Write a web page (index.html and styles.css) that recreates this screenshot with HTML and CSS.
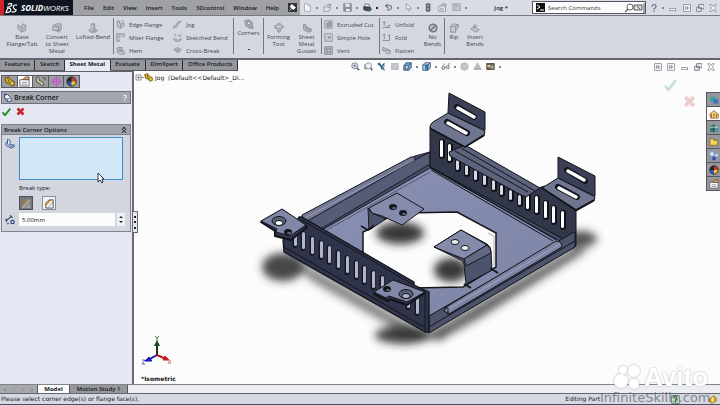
FILE: index.html
```html
<!DOCTYPE html>
<html lang="en">
<head>
<meta charset="utf-8">
<title>SolidWorks - Jog</title>
<link rel="stylesheet" href="styles.css">
</head>
<body>
<svg class="sprite" aria-hidden="true">
  <symbol id="flange" viewBox="0 0 12 12"><path d="M1 2l3-1 2 5 4-2 1 3-5 4-4-2z" fill="#c3c5cb" stroke="#85878e"/><path d="M4 1l2 5v5M7 1l3 1v2" fill="none" stroke="#85878e"/></symbol>
  <symbol id="miter" viewBox="0 0 12 12"><path d="M1 1h10v4H5v6H1z" fill="#b9bbc2" stroke="#8b8d94"/><path d="M6 10l4-4M3 9l6-7" stroke="#e8eaf0"/></symbol>
  <symbol id="hem" viewBox="0 0 12 12"><path d="M9 2H3Q1 2 1 4t2 2h8M3 4h6M1 8l4 3h6V8L5 7z" fill="#c5c7ce" stroke="#85878e"/></symbol>
  <symbol id="jog" viewBox="0 0 12 12"><path d="M1 8l3-1 3-5h4L8 4 5 9l-4 2z" fill="#c5c7ce" stroke="#85878e"/></symbol>
  <symbol id="bend" viewBox="0 0 12 12"><path d="M2 1l2 4M1 7q5 5 10 0l-1 3q-4 3-8 0zM7 2l2 3 2-3" fill="#c5c7ce" stroke="#85878e"/></symbol>
  <symbol id="cross" viewBox="0 0 12 12"><path d="M1 5l5-3 5 3-4 4z" fill="#c5c7ce" stroke="#85878e"/><path d="M3 4l6 3M8 3L5 8" stroke="#85878e"/></symbol>
  <symbol id="base" viewBox="0 0 12 12"><path d="M1 2l4 3 2-4 4 2-1 6-5 2-4-4z" fill="#bfc1c8" stroke="#8b8d94"/><path d="M5 5l1 5M10 4L6 8" stroke="#85878e"/></symbol>
  <symbol id="convert" viewBox="0 0 12 12"><path d="M1 3l4-2h6v6L8 9H1z" fill="#bfc1c8" stroke="#8b8d94"/><path d="M3 4h5v4M5 9l3 2 3-3" fill="none" stroke="#777a82"/></symbol>
  <symbol id="loft" viewBox="0 0 12 12"><path d="M4 1h4v5l3 3-2 2H3L1 9l3-3z" fill="#a6a8b0" stroke="#8b8d94"/><path d="M5 2v5l-2 3" fill="none" stroke="#e0e2e8"/></symbol>
  <symbol id="corner" viewBox="0 0 12 12"><path d="M1 2l5-1 4 3v3l1 4H7L2 8z" fill="#a8aab1" stroke="#85878e"/><circle cx="6" cy="5" r="2" fill="#d8dae1" stroke="#85878e"/></symbol>
  <symbol id="form" viewBox="0 0 12 12"><path d="M1 3h3V1h4v2h3v3H9l-2 5H5L3 6H1z" fill="#b2b4bb" stroke="#8b8d94"/><path d="M3 4h6" stroke="#e6e8ee"/></symbol>
  <symbol id="gusset" viewBox="0 0 12 12"><path d="M2 1l2 1v4l7 1v3l-4 1-5-3z" fill="#bfc1c8" stroke="#85878e"/><path d="M4 2l4 5M5 8l5 1" stroke="#85878e"/></symbol>
  <symbol id="cut" viewBox="0 0 12 12"><rect x="1" y="1" width="10" height="10" fill="#c3c5cb" stroke="#92949a"/><path d="M4 9V5l2-2h3v5L7 9z" fill="#9da0a8" stroke="#7d8088"/></symbol>
  <symbol id="hole" viewBox="0 0 12 12"><rect x="1" y="1" width="10" height="10" fill="#c3c5cb" stroke="#92949a"/><circle cx="7" cy="6" r="3" fill="#9da0a8" stroke="#e2e4ea"/></symbol>
  <symbol id="vent" viewBox="0 0 12 12"><rect x="1" y="1" width="10" height="10" fill="#c3c5cb" stroke="#7d8088"/><path d="M1 4h10M1 8h10M4 1v10M8 1v10" stroke="#7d8088"/></symbol>
  <symbol id="unfold" viewBox="0 0 12 12"><path d="M1 10h10M3 8V2M1 4l2-2 2 2M6 8h4V6" fill="none" stroke="#777a82"/></symbol>
  <symbol id="fold" viewBox="0 0 12 12"><path d="M1 10h9V2M3 2v6M1 3l2-2 2 2M8 4l2-2" fill="none" stroke="#777a82"/></symbol>
  <symbol id="flat" viewBox="0 0 12 12"><path d="M1 2v4h3l2 4h5V6L7 4z" fill="#c5c7ce" stroke="#85878e"/><path d="M4 6h7" stroke="#85878e"/></symbol>
  <symbol id="nobend" viewBox="0 0 12 12"><circle cx="6" cy="6" r="4.500" fill="#c5c7ce" stroke="#74777e" stroke-width="2"/><path d="M3 9l6-6" stroke="#74777e" stroke-width="2"/></symbol>
  <symbol id="rip" viewBox="0 0 12 12"><path d="M2 4l3-3 6 1v4l-3 2v3H2z" fill="#c9cbd2" stroke="#85878e"/><path d="M2 4h6v4M8 4l3-2" fill="none" stroke="#85878e"/></symbol>
  <symbol id="insert" viewBox="0 0 12 12"><path d="M1 7l4-2 6 3-4 3zM6 1v4M4 3l2 3 3-3" fill="#c5c7ce" stroke="#85878e"/></symbol>

  <symbol id="doc" viewBox="0 0 12 12"><path d="M2 1h5l3 3v7H2z" fill="#f5f6fa" stroke="#9a9ca3"/><path d="M7 1v3h3" fill="none" stroke="#9a9ca3"/></symbol>
  <symbol id="open" viewBox="0 0 12 12"><path d="M1 5h4l1 1h4l-2 5H1z" fill="#dfe1e7" stroke="#8d8f96"/><path d="M5 4q2-4 5-2M10 1v3H7" fill="none" stroke="#777a82"/></symbol>
  <symbol id="save" viewBox="0 0 12 12"><path d="M1 1h10v10H1z" fill="#92949c" stroke="#777a82"/><path d="M3 1h6v4H3zM4 8h5v3H4z" fill="#e5e7ed"/></symbol>
  <symbol id="print" viewBox="0 0 12 12"><path d="M3 1l5 1 1 3H2z" fill="#fff" stroke="#444c58"/><path d="M1 5l9 1 1 3-3 2-7-2z" fill="#42505f" stroke="#27313c"/><path d="M5 9h5l-2 2z" fill="#2b7fb4"/></symbol>
  <symbol id="undo" viewBox="0 0 12 12"><path d="M4 9q6 1 6-3T3 4M5 1L2 4l4 3" fill="none" stroke="#777a82" stroke-width="1.500"/></symbol>
  <symbol id="arrow" viewBox="0 0 12 12"><path d="M3 1v8l2-2 2 4 1-1-1-3h3z" fill="#f2f3f7" stroke="#8d8f96"/></symbol>
  <symbol id="signal" viewBox="0 0 12 12"><rect x="3" y="1" width="5" height="10" rx="1" fill="#6c6e75" stroke="#55575e"/><circle cx="5.500" cy="3.500" r="1" fill="#ccc"/><circle cx="5.500" cy="8" r="1" fill="#ccc"/></symbol>
  <symbol id="props" viewBox="0 0 12 12"><path d="M1 4h9v7H1z" fill="#eceef3" stroke="#85878e"/><path d="M4 4l2-3 5 1-3 3M3 7h5M3 9h4" fill="#c4c6cc" stroke="#85878e"/></symbol>
  <symbol id="list" viewBox="0 0 12 12"><path d="M1 1h10v9H1z" fill="#d0d2d9" stroke="#92949a"/><path d="M3 3h6M3 5h6M3 7h3M8 7h2" stroke="#92949a"/></symbol>
  <symbol id="pin" viewBox="0 0 12 12"><rect width="12" height="12" fill="#33353b"/><path d="M5 2l5 4-3 3-4-4zM5 7l-3 3" fill="#fff" stroke="#fff"/></symbol>
  <symbol id="help" viewBox="0 0 12 12"><path d="M3 4q0-3 3-3t3 3q0 2-3 3v1" fill="none" stroke="#777a82" stroke-width="2"/><path d="M6 9.500v2" stroke="#777a82" stroke-width="2"/></symbol>
  <symbol id="min" viewBox="0 0 12 12"><rect x="1" y="7" width="9" height="3" fill="#fff" stroke="#777a82"/></symbol>
  <symbol id="tile" viewBox="0 0 12 12"><rect x="1" y="1" width="10" height="10" fill="#f3f4f8" stroke="#777a82"/><path d="M4 3v6M7 3v6M3 6h6" stroke="#777a82"/></symbol>
  <symbol id="rest" viewBox="0 0 12 12"><path d="M4 1h8v6H4zM1 5h7v6H1z" fill="#eef0f5" stroke="#777a82" stroke-width="1.400"/></symbol>
  <symbol id="close" viewBox="0 0 12 12"><path d="M1 1h3l2 3 2-3h3L8 6l3 5H8L6 8l-2 3H1l3-5z" fill="#fff" stroke="#777a82"/></symbol>

  <symbol id="zoomfit" viewBox="0 0 12 12"><circle cx="5" cy="5" r="4" fill="#e6ebf2" stroke="#59616d"/><path d="M8 8l3 3" stroke="#59616d" stroke-width="2"/><path d="M3 5h4M5 3v4" stroke="#3f5f8d"/></symbol>
  <symbol id="zoomarea" viewBox="0 0 12 12"><circle cx="6" cy="5" r="4" fill="#eff1f5" stroke="#7d828c"/><path d="M9 8l2 3" stroke="#59616d" stroke-width="2"/><path d="M1 9V3M1 9h3" stroke="#59616d"/></symbol>
  <symbol id="prev" viewBox="0 0 12 12"><path d="M1 2l5 4 4-4M3 1l4 9M6 6l4 5" fill="none" stroke="#24567a" stroke-width="1.600"/><path d="M7 8l3-3" stroke="#41a0b0" stroke-width="2"/></symbol>
  <symbol id="section" viewBox="0 0 12 12"><path d="M2 2h9v8H2z" fill="#c5c6ca" stroke="#aeb0b5"/></symbol>
  <symbol id="orient" viewBox="0 0 12 12"><path d="M1 5l3-4h7v6l-3 4H1z" fill="#72a2cc" stroke="#29465f"/><path d="M3 5h4v4H3zM8 4l3-3" fill="#e9f2fa" stroke="#29465f"/></symbol>
  <symbol id="cube" viewBox="0 0 12 12"><path d="M1 4l3-3h7v7l-3 3H1z" fill="#b8cde4" stroke="#244467"/><path d="M4 4h4v7H4z" fill="#3e7cba"/><path d="M1 4h7v7M8 4l3-3" fill="none" stroke="#244467"/></symbol>
  <symbol id="glasses" viewBox="0 0 12 12"><circle cx="3" cy="8" r="2" fill="#eee" stroke="#565a62"/><circle cx="9" cy="7" r="2" fill="#eee" stroke="#565a62"/><path d="M5 7h2M2 6l3-4M10 5l1-4" fill="none" stroke="#565a62"/></symbol>
  <symbol id="ball" viewBox="0 0 12 12"><circle cx="6" cy="6" r="5" fill="#c3c4c8" stroke="#b3b5b9"/></symbol>
  <symbol id="scene" viewBox="0 0 12 12"><path d="M6 1l5 9H1z" fill="#c0c1c5" stroke="#aeb0b5"/><path d="M3 9h7" stroke="#999ba0"/></symbol>
  <symbol id="view" viewBox="0 0 12 12"><path d="M1 2h10v8H1z" fill="#6d6358" stroke="#3d3833"/><path d="M2 4h4v3H2z" fill="#ddc7a1"/><path d="M7 5h3v4H7z" fill="#a6bf91"/></symbol>

  <symbol id="part" viewBox="0 0 12 12"><path d="M1 2l4-1 3 4 3 1v4l-3 1-3-3-3-1z" fill="#e1b824" stroke="#57450f"/><path d="M4 2l1 4 4 3" fill="none" stroke="#57450f"/><circle cx="9" cy="8" r="1" fill="#fff1a2"/></symbol>
  <symbol id="hand" viewBox="0 0 12 12"><path d="M1 4h10v7H1z" fill="#fff" stroke="#5f6269"/><path d="M4 4l3-3h4v3z" fill="#e6a46c" stroke="#76503a"/><path d="M3 7h6M3 9h6" stroke="#8d8f96"/></symbol>
  <symbol id="config" viewBox="0 0 12 12"><path d="M1 2l3-1 1 4 3 1 2 4-3 1-2-3-3-1z" fill="#c7c193" stroke="#55533f"/><path d="M8 2h3v3" fill="none" stroke="#444"/></symbol>
  <symbol id="target" viewBox="0 0 12 12"><circle cx="6" cy="6" r="3.500" fill="none" stroke="#cf4bd2"/><path d="M6 0v12M0 6h12" stroke="#cf4bd2"/></symbol>
  <symbol id="wheel" viewBox="0 0 12 12"><circle cx="6" cy="6" r="5" fill="#2a58c2"/><path d="M6 6V1a5 5 0 0 1 5 5z" fill="#d93a20"/><path d="M6 6h5a5 5 0 0 1-5 5z" fill="#f3cb23"/><path d="M6 6H1a5 5 0 0 1 5-5z" fill="#252525"/><circle cx="6" cy="6" r="5" fill="none" stroke="#222"/></symbol>
  <symbol id="breakc" viewBox="0 0 12 12"><path d="M2 6V2h4l5 5v4H5z" fill="#f5f7fb" stroke="#1e2e50"/><path d="M2 6l4 2v3M6 8l4-1" fill="none" stroke="#2d4a83"/><circle cx="3" cy="2" r="1.500" fill="#3455a8"/></symbol>
  <symbol id="edge" viewBox="0 0 12 12"><path d="M3 1l3 1v5l5 1v2l-4 1.500L1 8V5l2-1z" fill="#edf1fa" stroke="#294a85"/><path d="M3 4v3l4 2 4-1M7 9v2" fill="none" stroke="#294a85"/><circle cx="8" cy="9" r="1.500" fill="#7f9fd2"/></symbol>
  <symbol id="dist" viewBox="0 0 12 12"><path d="M1 8l7-6M1 5l1 4M6 1l3 3" fill="none" stroke="#333d55" stroke-width="1.300"/><circle cx="9" cy="9" r="2" fill="none" stroke="#293f86" stroke-width="1.300"/><path d="M2 11h3" stroke="#293f86"/></symbol>
  <symbol id="check" viewBox="0 0 12 12"><path d="M1 7l3 4 7-9" fill="none" stroke="currentColor" stroke-width="2.600"/></symbol>
  <symbol id="x" viewBox="0 0 12 12"><path d="M2 2l8 8M10 2l-8 8" fill="none" stroke="currentColor" stroke-width="3.400"/></symbol>
  <symbol id="chamfer" viewBox="0 0 12 12"><path d="M2 11V6l4-4h4v9z" fill="#fbfbfd"/><path d="M1 6l4-4h4L2 9z" fill="#e1a537"/><path d="M3 11l7-8v3l-5 5z" fill="#c1c4cc"/><path d="M2 11V6l4-4h4v9z" fill="none" stroke="#555"/></symbol>
  <symbol id="fillet" viewBox="0 0 12 12"><path d="M1 11Q1 2 10 1v10z" fill="#a9a7a2"/><path d="M1 9Q2 2 9 1L2 9z" fill="#a37b3d"/><path d="M3 11l7-8v4l-4 4z" fill="#8d9098"/></symbol>
  <symbol id="chat" viewBox="0 0 12 12"><path d="M1 2h7v5H4L2 9V7H1z" fill="#36a98d"/><path d="M5 5h6v5H9l-1 1-1-1H5z" fill="#3c71c5"/></symbol>
  <symbol id="home" viewBox="0 0 12 12"><path d="M1 6l5-4 5 4v5H2z" fill="#f4d98b" stroke="#90602a"/><path d="M3 6v4M6 5v5M9 6v4" stroke="#9b3b21"/></symbol>
  <symbol id="books" viewBox="0 0 12 12"><path d="M1 3h3v8H1z" fill="#2e8b50"/><path d="M4 2h3v9H4z" fill="#27537d"/><path d="M8 3h3v8H8z" fill="#35a0a0"/><path d="M1 5h10" stroke="#e1e5c5"/></symbol>
  <symbol id="folder" viewBox="0 0 12 12"><path d="M1 2h4l1 2h5l-1 6H1z" fill="#f2d461" stroke="#80651b"/></symbol>
  <symbol id="palette" viewBox="0 0 12 12"><path d="M1 1h5v5H1zM7 3h4v4H7z" fill="#dfe8f4" stroke="#7694b9"/><path d="M4 7h4v4H4z" fill="#2856b1"/></symbol>
</svg>

<div class="app">
  <header class="titlebar">
    <div class="brand">
      <svg class="brand-mark" viewBox="0 0 14 12" aria-hidden="true"><path d="M3 2q5-2 4 1-1 2-5 2M3 6q4 0 3 3-1 2-5 2L3 6M13 3Q8 2 9 5t3 3q0 3-5 2" fill="none" stroke="#fff" stroke-width="1.300"/></svg>
      <span class="brand-name"><b>SOLID</b>WORKS</span>
    </div>
    <nav class="menus">
      <a href="#">File</a><a href="#">Edit</a><a href="#">View</a><a href="#">Insert</a><a href="#">Tools</a><a href="#">3Dcontrol</a><a href="#">Window</a><a href="#">Help</a>
      <button class="ib" aria-label="Pin menu"><svg><use href="#pin"/></svg></button>
    </nav>
    <div class="quick">
      <button class="ib drop" aria-label="New"><svg><use href="#doc"/></svg></button>
      <button class="ib drop" aria-label="Open"><svg><use href="#open"/></svg></button>
      <button class="ib drop" aria-label="Save"><svg><use href="#save"/></svg></button>
      <button class="ib drop dark" aria-label="Print"><svg><use href="#print"/></svg></button>
      <button class="ib drop" aria-label="Undo"><svg><use href="#undo"/></svg></button>
      <button class="ib drop" aria-label="Select"><svg><use href="#arrow"/></svg></button>
      <button class="ib" aria-label="Rebuild"><svg><use href="#signal"/></svg></button>
      <button class="ib" aria-label="File properties"><svg><use href="#props"/></svg></button>
      <button class="ib drop" aria-label="Options"><svg><use href="#list"/></svg></button>
    </div>
    <h1 class="doc-title">Jog *</h1>
    <div class="search">
      <svg class="prompt" viewBox="0 0 9 9" aria-hidden="true"><rect width="9" height="9" fill="#111"/><path d="M1 2l3 2-3 2M4 7h4" fill="none" stroke="#fff"/></svg>
      <input type="text" aria-label="Search Commands" placeholder="Search Commands">
      <svg class="lens" viewBox="0 0 20 10" aria-hidden="true"><circle cx="5" cy="4" r="3" fill="#fff" stroke="#666"/><path d="M3 6L0 9" stroke="#666" stroke-width="1.500"/><path d="M9 2h8v5H9z" fill="#ddd" stroke="#555"/><path d="M12 3l3 3M19 0v10" stroke="#555"/></svg>
    </div>
    <div class="window-tools">
      <button class="ib drop" aria-label="Help"><svg><use href="#help"/></svg></button>
      <button class="ib" aria-label="Minimize"><svg><use href="#min"/></svg></button>
      <button class="ib" aria-label="Tile"><svg><use href="#tile"/></svg></button>
      <button class="ib" aria-label="Restore"><svg><use href="#rest"/></svg></button>
      <button class="ib" aria-label="Close"><svg><use href="#close"/></svg></button>
    </div>
  </header>

  <section class="ribbon" aria-label="Sheet Metal commands">
    <div class="group lead">
      <button class="big"><svg><use href="#base"/></svg>Base<br>Flange/Tab</button>
      <button class="big"><svg><use href="#convert"/></svg>Convert<br>to Sheet<br>Metal</button>
      <button class="big"><svg><use href="#loft"/></svg>Lofted-Bend</button>
    </div>
    <div class="group two">
      <div class="stack">
        <button class="row"><svg><use href="#flange"/></svg>Edge Flange</button>
        <button class="row"><svg><use href="#miter"/></svg>Miter Flange</button>
        <button class="row"><svg><use href="#hem"/></svg>Hem</button>
      </div>
      <div class="stack">
        <button class="row"><svg><use href="#jog"/></svg>Jog</button>
        <button class="row"><svg><use href="#bend"/></svg>Sketched Bend</button>
        <button class="row"><svg><use href="#cross"/></svg>Cross-Break</button>
      </div>
    </div>
    <div class="group corners">
      <button class="big high"><svg><use href="#corner"/></svg>Corners<span class="more"></span></button>
    </div>
    <div class="group pair">
      <button class="big"><svg><use href="#form"/></svg>Forming<br>Tool</button>
      <button class="big"><svg><use href="#gusset"/></svg>Sheet<br>Metal<br>Gusset</button>
    </div>
    <div class="group cuts">
      <div class="stack">
        <button class="row"><svg><use href="#cut"/></svg>Extruded Cut</button>
        <button class="row"><svg><use href="#hole"/></svg>Simple Hole</button>
        <button class="row"><svg><use href="#vent"/></svg>Vent</button>
      </div>
    </div>
    <div class="group folds">
      <div class="stack">
        <button class="row"><svg><use href="#unfold"/></svg>Unfold</button>
        <button class="row"><svg><use href="#fold"/></svg>Fold</button>
        <button class="row"><svg><use href="#flat"/></svg>Flatten</button>
      </div>
      <button class="big"><svg><use href="#nobend"/></svg>No<br>Bends</button>
    </div>
    <div class="group tail">
      <button class="big"><svg><use href="#rip"/></svg>Rip</button>
      <button class="big"><svg><use href="#insert"/></svg>Insert<br>Bends</button>
    </div>
  </section>

  <div class="tabrow">
    <nav class="tabs">
      <a href="#">Features</a><a href="#">Sketch</a><a href="#" class="on">Sheet Metal</a><a href="#">Evaluate</a><a href="#">DimXpert</a><a href="#">Office Products</a>
    </nav>
    <div class="hud">
      <button class="ib" aria-label="Zoom to fit"><svg><use href="#zoomfit"/></svg></button>
      <button class="ib" aria-label="Zoom to area"><svg><use href="#zoomarea"/></svg></button>
      <button class="ib" aria-label="Previous view"><svg><use href="#prev"/></svg></button>
      <button class="ib" aria-label="Section view"><svg><use href="#section"/></svg></button>
      <button class="ib drop" aria-label="View orientation"><svg><use href="#orient"/></svg></button>
      <button class="ib drop" aria-label="Display style"><svg><use href="#cube"/></svg></button>
      <button class="ib drop" aria-label="Hide or show items"><svg><use href="#glasses"/></svg></button>
      <button class="ib" aria-label="Edit appearance"><svg><use href="#ball"/></svg></button>
      <button class="ib" aria-label="Apply scene"><svg><use href="#scene"/></svg></button>
      <button class="ib drop" aria-label="View settings"><svg><use href="#view"/></svg></button>
    </div>
    <div class="window-tools doc-tools">
      <button class="ib" aria-label="Split left"><svg><use href="#tile"/></svg></button>
      <button class="ib" aria-label="Split right"><svg><use href="#tile"/></svg></button>
      <button class="ib" aria-label="Minimize document"><svg><use href="#min"/></svg></button>
      <button class="ib" aria-label="Restore document"><svg><use href="#rest"/></svg></button>
      <button class="ib" aria-label="Close document"><svg><use href="#close"/></svg></button>
    </div>
  </div>

  <div class="body">
    <aside class="panel">
      <nav class="panel-tabs">
        <button aria-label="Feature tree"><svg><use href="#part"/></svg></button>
        <button class="on" aria-label="Properties"><svg><use href="#hand"/></svg></button>
        <button aria-label="Configurations"><svg><use href="#config"/></svg></button>
        <button aria-label="Dimensions"><svg><use href="#target"/></svg></button>
        <button aria-label="Display"><svg><use href="#wheel"/></svg></button>
      </nav>
      <div class="panel-head"><svg aria-hidden="true"><use href="#breakc"/></svg><h2>Break Corner</h2><button aria-label="Help">?</button></div>
      <div class="confirm">
        <button class="ok" aria-label="OK"><svg><use href="#check"/></svg></button>
        <button class="cancel" aria-label="Cancel"><svg><use href="#x"/></svg></button>
      </div>
      <section class="options">
        <h3>Break Corner Options<svg viewBox="0 0 6 8" aria-hidden="true"><path d="M1 4l2-3 2 3M1 7l2-3 2 3" fill="none" stroke="#222"/></svg></h3>
        <div class="fields">
          <svg class="field-icon" aria-hidden="true"><use href="#edge"/></svg>
          <textarea class="selection" aria-label="Corner edges or flange faces"></textarea>
          <span class="type-label" id="bt">Break type:</span>
          <div class="types" role="group" aria-labelledby="bt">
            <button class="pressed" aria-label="Chamfer"><svg><use href="#fillet"/></svg></button>
            <button aria-label="Fillet"><svg><use href="#chamfer"/></svg></button>
          </div>
          <svg class="field-icon" aria-hidden="true"><use href="#dist"/></svg>
          <div class="spin">
            <input type="text" value="5.00mm" aria-label="Distance">
            <div class="steps"><button class="up" aria-label="Increase"></button><button class="down" aria-label="Decrease"></button></div>
          </div>
        </div>
      </section>
      <svg class="pointer" viewBox="0 0 8 12" aria-hidden="true"><path d="M1 1v9l2-2 2 3 1-1-1-3h2z" fill="#fff" stroke="#333"/></svg>
    </aside>

    <main class="viewport">
      <svg class="scene" viewBox="134 71 586 313" role="img" aria-label="Sheet metal tray">
        <defs>
          <filter id="soft" x="-50%" y="-50%" width="200%" height="200%"><feGaussianBlur stdDeviation="4"/></filter>
          <clipPath id="opening"><path d="M363 232L372 228 374 222 405 213 457 212 496 233V267L463 287 413 288 363 253z"/></clipPath>
          <linearGradient id="floor" x1="0" y1="0" x2="1" y2="1"><stop offset="0" stop-color="#8a90b2"/><stop offset="1" stop-color="#7e84a6"/></linearGradient>
          <g id="slot"><rect x="-2.500" y="-10" width="5" height="20" rx="2.500" fill="#16181f"/><rect x="-1" y="-9" width="3" height="17" rx="1.500" fill="#b1b5c9"/></g>
          <g id="open-slot"><rect x="-3" y="-10" width="6" height="20" rx="3" fill="#10121a"/><rect x="-2" y="-9" width="3" height="17" rx="1.500" fill="#fbfbfc"/></g>
          <g id="short-slot"><rect x="-3" y="-7" width="6" height="14" rx="3" fill="#10121a"/><rect x="-2" y="-5" width="3" height="10" rx="1.500" fill="#d8dae3"/></g>
          <g id="hole-s"><ellipse rx="4" ry="3" fill="#14161d"/><ellipse cx="1" cy="1" rx="2" ry="1" fill="#666b80"/></g>
        </defs>
        <g filter="url(#soft)">
          <ellipse cx="283" cy="267" rx="21" ry="14" fill="#333" opacity=".9"/>
          <path d="M285 252L425 332 450 330 440 341 408 336 310 280z" fill="#333" opacity=".6"/>
          <ellipse cx="403" cy="335" rx="28" ry="9" fill="#222" opacity=".85"/>
          <path d="M430 332L575 247 588 250 480 318 440 340z" fill="#333" opacity=".75"/>
          <ellipse cx="580" cy="239" rx="17" ry="8" fill="#333" opacity=".85"/>
        </g>
        <g stroke="#171922" stroke-linejoin="round">
          <path d="M303 219L415 156 430 152V168L575 238 575 246 429 332 300 258z" fill="#4a4f68"/>
          <path d="M322 230L430 168 560 241 500 277 429 318 322 260z" fill="url(#floor)"/>
          <path d="M303 219L430 152V164L324 227 320 229z" fill="#565b76"/>
          <path d="M325 231L430 172" stroke="#555a76"/>
          <path d="M302 215L411 157Q415 156 416 159L304 223z" fill="#747a96"/>
          <path d="M303 219L414 160" stroke="#9a9fb5"/>
        </g>
        <path d="M363 232L372 228 374 222 405 213 457 212 496 233V267L463 287 413 288 363 253z" fill="#fcfcfc" stroke="#14161d" stroke-width="1.500"/>
        <g clip-path="url(#opening)"><g filter="url(#soft)"><ellipse cx="400" cy="233" rx="24" ry="11" fill="#222" opacity=".9"/><ellipse cx="451" cy="270" rx="17" ry="12" fill="#222" opacity=".9"/></g></g>
        <path d="M488 233L494 236V266" fill="none" stroke="#aaadb9"/>
        <g stroke="#14161d" stroke-linejoin="round">
          <path d="M368 208L372 213 386 219 369 230z" fill="#4d526b"/>
          <path d="M369 208L397 193 424 209 402 225 382 216 372 213z" fill="#858bab"/>
          <path d="M361 226l7 4 6-5" fill="none" stroke-width="1.500"/>
          <path d="M434 247L461 230 487 244Q491 247 491 251L492 270 466 284 464 264Q463 260 459 259z" fill="#4e536d"/>
          <path d="M434 247L461 230 487 245 464 259z" fill="#858bab"/>
          <path d="M464 259L487 245Q491 248 491 253L466 266z" fill="#626782"/>
          <path d="M464 284l7 4M490 268l8 5" stroke-width="2"/>
        </g>
        <use href="#hole-s" x="393" y="207"/><use href="#hole-s" x="403" y="213"/>
        <ellipse cx="455" cy="242" rx="4" ry="2.500" fill="#eee" stroke="#14161d"/><ellipse cx="465" cy="248" rx="4" ry="2.500" fill="#eee" stroke="#14161d"/>

        <g stroke="#12141b" stroke-linejoin="round">
          <path d="M430 127L450 116 475 138 465 146 538 188 545 186 576 209V246L430 167z" fill="#33374a"/>
        </g>
        <use href="#open-slot" x="442" y="149"/><use href="#open-slot" x="450" y="153"/>
        <use href="#short-slot" x="458" y="165"/><use href="#short-slot" x="467" y="170"/><use href="#short-slot" x="476" y="175"/><use href="#short-slot" x="485" y="180"/><use href="#short-slot" x="494" y="185"/><use href="#short-slot" x="502" y="190"/><use href="#short-slot" x="511" y="195"/><use href="#short-slot" x="520" y="200"/>
        <use href="#open-slot" x="528" y="201"/><use href="#open-slot" x="537" y="205"/><use href="#open-slot" x="546" y="210"/><use href="#open-slot" x="554" y="215"/><use href="#open-slot" x="563" y="220"/>
        <g stroke="#12141b" stroke-linejoin="round">
          <path d="M449 152L465 145 540 188 526 197 521 195 450 156z" fill="#5d627d"/>
          <path d="M455 151L528 192M461 148l74 43" fill="none"/>
          <path d="M449 93L485 112V130L448 113z" fill="#3b4056"/>
          <path d="M430 127Q430 124 433 122L448 113 485 131 484 136 465 147 432 129z" fill="#70768f"/>
          <path d="M431 129L465 147 484 135" fill="none" stroke-width="1.500"/>
          <path d="M558 157L595 176V196L558 178z" fill="#3b4056"/>
          <path d="M542 188L558 178 595 197 594 201 576 211z" fill="#70768f"/>
          <path d="M542 188L576 210 594 200" fill="none" stroke-width="1.500"/>
          <path d="M431 167L556 240M431 170L553 241" fill="none"/>
        </g>
        <g stroke-linecap="round">
          <path d="M457 107L474 117M447 122L467 133M567 170L585 181M558 187L577 197" stroke="#12141b" stroke-width="6"/>
          <path d="M458 108L474 117M448 123L466 133M568 171L584 180M559 188L576 197" stroke="#fbfbfc" stroke-width="3.500"/>
        </g>

        <g stroke="#12141b" stroke-linejoin="round">
          <path d="M429 316L569 235 575 232V247L429 333z" fill="#4e536c"/>
          <path d="M446 307L556 241Q562 241 562 247L449 314 444 311z" fill="#7e84a4"/>
          <path d="M447 310L560 244" stroke="#a3a8c0"/>
          <path d="M429 327L575 241M448 315v-7h-4" fill="none"/>
          <path d="M283 240L299 217 302 217 414 282V285L429 292V332H425L284 252z" fill="#30344a" stroke-width="1.300"/>
          <path d="M300 219L414 285M425 293V331M284 247L424 327" fill="none"/>
        </g>
        <use href="#slot" x="295" y="238"/><use href="#slot" x="303" y="241"/><use href="#slot" x="312" y="246"/><use href="#slot" x="321" y="250"/><use href="#slot" x="329" y="255"/><use href="#slot" x="338" y="260"/><use href="#slot" x="347" y="265"/><use href="#slot" x="356" y="270"/><use href="#slot" x="364" y="275"/><use href="#slot" x="373" y="280"/><use href="#slot" x="382" y="285"/><use href="#slot" x="408" y="300"/><use href="#slot" x="417" y="306"/>
        <g stroke="#12141b" stroke-linejoin="round">
          <path d="M261 222L282 210 307 227 291 240 275 236 275 231z" fill="#343950" stroke-width="2"/>
          <path d="M261 221L282 209 306 225 290 236 276 232 277 229z" fill="#8187a6"/>
          <path d="M374 294L393 281 425 293 407 305 390 299 388 301z" fill="#343950" stroke-width="2"/>
          <path d="M374 292L393 280 425 292 407 302 389 296 386 298z" fill="#8187a6"/>
          <ellipse cx="279" cy="221" rx="7" ry="4.500" fill="#5a5f79"/><ellipse cx="279" cy="223" rx="4" ry="2.500" fill="#fcfcfc"/>
          <ellipse cx="406" cy="294" rx="7" ry="4.500" fill="#5a5f79"/><ellipse cx="406" cy="296" rx="4" ry="2.500" fill="#b4b8ca"/>
        </g>
        <use href="#hole-s" x="288" y="232"/><use href="#hole-s" x="387" y="289"/>
      </svg>

      <div class="tree"><svg class="plus" viewBox="0 0 9 7" aria-hidden="true"><path d="M1 1h5v5H1zM2 3.500h3M3.500 2v3M6 3.500h3" fill="none" stroke="#666" stroke-width=".7"/></svg><svg class="node" aria-hidden="true"><use href="#part"/></svg><span>Jog&nbsp; (Default&lt;&lt;Default&gt;_Di...</span></div>
      <div class="ghost">
        <button class="ok" aria-label="Accept"><svg><use href="#check"/></svg></button>
        <button class="cancel" aria-label="Reject"><svg><use href="#x"/></svg></button>
      </div>
      <nav class="task-pane">
        <button aria-label="Forum"><svg><use href="#chat"/></svg></button>
        <button class="on" aria-label="Resources"><svg><use href="#home"/></svg></button>
        <button aria-label="Design library"><svg><use href="#books"/></svg></button>
        <button aria-label="File explorer"><svg><use href="#folder"/></svg></button>
        <button aria-label="View palette"><svg><use href="#palette"/></svg></button>
        <button aria-label="Appearances"><svg><use href="#wheel"/></svg></button>
        <button aria-label="Custom properties"><svg><use href="#hand"/></svg></button>
      </nav>
      <div class="handle" aria-hidden="true"><i></i><i></i><i></i></div>
      <div class="triad">
        <svg viewBox="0 0 34 32" aria-hidden="true"><path d="M16 20V8" stroke="#173d18" stroke-width="2"/><path d="M13 11l3-6 3 6z" fill="#164a1a"/><path d="M16 20l-9 5" stroke="#17179a" stroke-width="2"/><path d="M4 26l4-4 3 4z" fill="#1616c8" stroke="#1616c8"/><path d="M16 20l9 4" stroke="#b61c1c" stroke-width="2"/><path d="M28 25l-6 0 2-4z" fill="#c81b1b" stroke="#c81b1b"/><path d="M14 1l2 2 2-2M16 3v3" fill="none" stroke="#244a28" stroke-width=".8"/><path d="M1 25h3l-3 4h3" fill="none" stroke="#3838a0" stroke-width=".8"/><path d="M27 25l3 4M30 25l-3 4" stroke="#c85050" stroke-width=".8"/></svg>
        <span>*Isometric</span>
      </div>
    </main>
  </div>

  <div class="sheets">
    <div class="pager"><button aria-label="First">«</button><button aria-label="Previous">‹</button><button aria-label="Next">›</button><button aria-label="Last">»</button></div>
    <a href="#" class="on">Model</a><a href="#">Motion Study 1</a>
  </div>
  <footer class="status">
    <span>Please select corner edge(s) or flange face(s).</span>
    <span class="mode">Editing Part</span>
    <svg class="st-icon" viewBox="0 0 12 12" aria-hidden="true"><rect x="1" y="1" width="10" height="10" fill="#d7ecdc" stroke="#276b3f"/><path d="M4 4q0-2 2-2t2 2L6 7v1M6 9v1" fill="none" stroke="#1b5e33" stroke-width="1.500"/></svg>
    <svg class="st-icon" viewBox="0 0 12 12" aria-hidden="true"><path d="M2 5l6-4 3 3v4l-6 3-4-3z" fill="#e0a931" stroke="#8a641b"/><path d="M6 3v6" stroke="#fff0a8" stroke-width="2"/></svg>
  </footer>

  <div class="mark">
    <div class="mark-brand"><svg viewBox="0 0 28 26" aria-hidden="true"><circle cx="9" cy="6" r="4"/><circle cx="20" cy="7" r="6"/><circle cx="7" cy="17" r="7"/><circle cx="20" cy="20" r="5"/></svg><span>Avito</span></div>
    <div class="mark-site">InfiniteSkills.com</div>
  </div>
</div>
</body>
</html>
```
FILE: styles.css
```css
* { box-sizing: border-box; }
body { margin: 0; background: #fcfcfc; }
h1, h2, h3 { margin: 0; font-size: inherit; font-weight: inherit; }
a { color: inherit; text-decoration: none; }
button { margin: 0; padding: 0; border: 0; background: none; color: inherit; font: inherit; }
input, textarea { min-width: 0; margin: 0; padding: 0; border: 0; color: inherit; font: inherit; }
svg { display: block; flex: none; }
.sprite { position: absolute; width: 0; height: 0; }

.app {
  position: relative;
  display: flex;
  flex-direction: column;
  height: 100vh;
  overflow: hidden;
  color: #15171b;
  font: 6px/8px "Open Sans", "Noto Sans", sans-serif;
}

.ib { display: flex; align-items: center; justify-content: center; }
.ib svg { width: 9px; height: 9px; }
.drop { gap: 4px; }
.drop::after { content: ""; border: 1px solid #85878e; }
.drop.dark::after { border-color: #222; }

/* Title bar */
.titlebar { display: flex; align-items: stretch; flex: none; height: 16px; background: #d9dce5; border-bottom: 1px solid #767981; }
.brand { display: flex; align-items: center; gap: 3px; width: 73px; padding-left: 1px; border-left: 4px solid #d3222a; background: #0e1420; color: #fff; }
.brand-mark { width: 13px; height: 12px; }
.brand-name { font: italic 8px/8px "Open Sans", sans-serif; }
.menus { display: flex; align-items: center; justify-content: space-between; width: 227px; padding: 0 3px 0 11px; background: #a0a1a7; font-weight: 600; }
.quick { display: flex; align-items: center; justify-content: space-between; width: 167px; padding-left: 3px; }
.doc-title { flex: 1; padding: 0 24px; align-self: center; text-align: right; font-weight: 600; white-space: nowrap; }
.search { display: flex; align-items: center; gap: 3px; width: 114px; margin: 1px 0; padding: 0 0 0 3px; border: 1px solid #555860; background: #fcfcfd; }
.search input { flex: 1; background: none; }
.search input::placeholder { color: #3a3d44; opacity: 1; }
.prompt { width: 9px; height: 9px; }
.lens { width: 20px; height: 10px; }
.window-tools { display: flex; align-items: center; justify-content: space-between; width: 74px; padding: 0 3px 0 4px; }
.window-tools .ib svg { width: 8px; height: 8px; }

/* Ribbon */
.ribbon { display: flex; flex: none; height: 44px; padding: 2px 0 4px; background: #d4d7e0; border-bottom: 2px solid #63666f; color: #43464d; }
.group { display: grid; border-right: 1px solid #74777f; }
.lead { grid-template-columns: 38px 32px 40px; width: 114px; padding-left: 3px; }
.two { grid-template-columns: 57px 61px; width: 120px; }
.corners { width: 30px; }
.pair { grid-template-columns: 29px 27px; width: 58px; }
.cuts { width: 58px; }
.folds { grid-template-columns: 41px 23px; width: 65px; }
.tail { grid-template-columns: 18px 24px; border: 0; }
.big { display: block; align-self: start; padding-top: 5px; line-height: 7px; text-align: center; white-space: nowrap; }
.big svg { width: 10px; height: 10px; margin: 0 auto 1px; }
.big.high { padding-top: 1px; }
.more { display: block; width: 2px; height: 1px; margin: 12px auto 0; background: #43464d; }
.stack { display: grid; grid-template-rows: repeat(3, 13px); align-content: start; padding-left: 2px; }
.row { display: flex; align-items: center; gap: 4px; text-align: left; white-space: nowrap; }
.row svg { width: 9px; height: 9px; }

/* Command tabs and view toolbar */
.tabrow { display: flex; flex: none; height: 11px; background: #fcfcfc; }
.tabs { display: flex; width: 238px; background: #96979d; }
.tabs a { flex: auto; border-right: 1px solid #2c2e34; border-bottom: 1px solid #5a5c63; text-align: center; line-height: 9px; font-weight: 600; white-space: nowrap; }
.tabs .on { background: #e6e9f2; border-bottom-color: #e6e9f2; font-weight: 700; }
.hud { display: flex; align-items: flex-end; gap: 4px; margin-left: 113px; }
.doc-tools { width: 66px; margin-left: auto; padding: 3px 5px 0 0; }

/* Property panel */
.body { display: flex; flex: 1; min-height: 0; }
.panel { position: relative; width: 134px; flex: none; padding: 3px 1px 0; border-top: 1px solid #5f626a; border-right: 2px solid #676a73; background: #e5e8f2; }
.panel-tabs { display: flex; width: 79px; height: 13px; border: 1px solid #55575e; }
.panel-tabs button { display: grid; flex: 1; place-items: center; border-right: 1px solid #55575e; background: #9c9da3; }
.panel-tabs button:last-child { border-right: 0; }
.panel-tabs .on { background: #fff; }
.panel-tabs svg { width: 11px; height: 11px; }
.panel-head { display: flex; align-items: center; gap: 2px; height: 13px; margin-top: 3px; padding: 0 3px 0 1px; border: 1px solid #70727a; background: #a5a7ae; font-size: 7px; font-weight: 600; }
.panel-head h2 { flex: 1; }
.panel-head svg { width: 9px; height: 9px; }
.panel-head button { color: #fff; font-size: 8px; }
.confirm { display: flex; gap: 5px; height: 20px; padding: 3px 0 0 1px; }
.confirm svg { width: 9px; height: 9px; }
.ok { align-self: start; color: #2a8b31; }
.cancel { align-self: start; color: #c6282b; }
.options { border: 1px solid #80838b; background: #d3d6de; }
.options h3 { display: flex; align-items: center; justify-content: space-between; height: 10px; padding: 0 3px 0 2px; border-bottom: 1px solid #80838b; background: #a2a4ab; font-weight: 600; }
.options h3 svg { width: 6px; height: 8px; }
.fields { display: grid; grid-template-columns: 13px 1fr; column-gap: 4px; padding: 2px 5px 4px 0; }
.field-icon { width: 10px; height: 11px; justify-self: end; margin-top: 1px; }
.selection { width: 104px; height: 43px; border: 1px solid #3c8fc8; background: #d2e8f8; resize: none; }
.type-label { grid-column: 2; padding: 4px 0; }
.types { display: flex; grid-column: 2; gap: 9px; margin-bottom: 3px; }
.types button { display: grid; width: 14px; height: 14px; place-items: center; border: 1px solid #8b8e96; background: #f1f2f6; }
.types .pressed { border-color: #4d5057; background: #75777d; }
.types svg { width: 11px; height: 11px; }
.spin { display: flex; gap: 2px; height: 13px; margin-bottom: 1px; }
.spin input { flex: 1; padding-left: 3px; background: #fcfcfd; }
.steps { display: flex; flex-direction: column; align-items: center; justify-content: space-evenly; width: 8px; background: #f1f2f6; }
.up, .down { border: 2px solid transparent; }
.up { border-top: 0; border-bottom-color: #222; }
.down { border-bottom: 0; border-top-color: #222; }
.pointer { position: absolute; left: 97px; top: 100px; width: 8px; height: 12px; }

/* Graphics area */
.viewport { position: relative; flex: 1; min-width: 0; background: #fcfcfc; }
.scene { width: 100%; height: 100%; }
.tree { position: absolute; left: 1px; top: 2px; display: flex; align-items: center; font-family: "DejaVu Sans", sans-serif; white-space: nowrap; }
.plus { width: 9px; height: 7px; }
.node { width: 9px; height: 9px; margin-right: 2px; }
.ghost { position: absolute; top: 7px; right: 24px; display: flex; gap: 6px; opacity: .22; }
.ghost svg { width: 13px; height: 13px; }
.ghost .cancel { margin-top: 17px; }
.task-pane { position: absolute; top: 21px; right: 0; display: grid; grid-auto-rows: 13px; row-gap: 1px; width: 14px; padding: 1px 0 1px 1px; background: #55575e; }
.task-pane button { display: grid; place-items: center; background: #96979d; }
.task-pane .on { background: #fcfcfc; }
.task-pane svg { width: 10px; height: 10px; }
.handle { position: absolute; left: -1px; top: 140px; display: grid; align-content: space-evenly; justify-items: center; width: 5px; height: 22px; border: 1px solid #676a73; border-left: 0; background: #e5e8f2; }
.handle i { width: 2px; height: 2px; background: #222; }
.triad { position: absolute; left: 7px; bottom: 1px; font-family: "DejaVu Sans", sans-serif; font-weight: 700; }
.triad svg { width: 34px; height: 32px; margin-bottom: 8px; }

/* Sheet tabs and status bar */
.sheets { display: flex; flex: none; height: 10px; border-top: 1px solid #80838b; border-bottom: 1px solid #63666f; background: #eceef4; line-height: 8px; }
.sheets a { width: 58px; border-right: 1px solid #55575e; background: #96979d; text-align: center; font-weight: 600; white-space: nowrap; }
.sheets .on { width: 32px; background: #fcfcfc; font-weight: 700; }
.pager { display: flex; width: 38px; justify-content: space-around; border-right: 1px solid #55575e; background: #a6a8ae; color: #6a6c73; }
.status { display: flex; align-items: center; flex: none; height: 11px; padding: 0 3px 0 1px; border-bottom: 1px solid #3f5660; background: #d6d9e1; font-family: "DejaVu Sans", sans-serif; white-space: nowrap; }
.mode { margin-left: auto; margin-right: 71px; }
.st-icon { width: 9px; height: 9px; }
.st-icon + .st-icon { margin-left: 28px; }

/* Corner watermark */
.mark { position: absolute; right: 0; bottom: 0; width: 120px; pointer-events: none; }
.mark-brand { display: flex; align-items: center; gap: 2px; margin-left: 14px; color: #fff; font: 700 26px/26px "Liberation Sans", sans-serif; text-shadow: 0 0 2px #aaadb3; }
.mark-brand svg { width: 28px; height: 26px; overflow: visible; fill: #fff; filter: drop-shadow(0 0 1px #aaadb3); }
.mark-site { color: rgb(90 93 99 / .7); font: 13px/15px "DejaVu Sans", sans-serif; white-space: nowrap; }
```
